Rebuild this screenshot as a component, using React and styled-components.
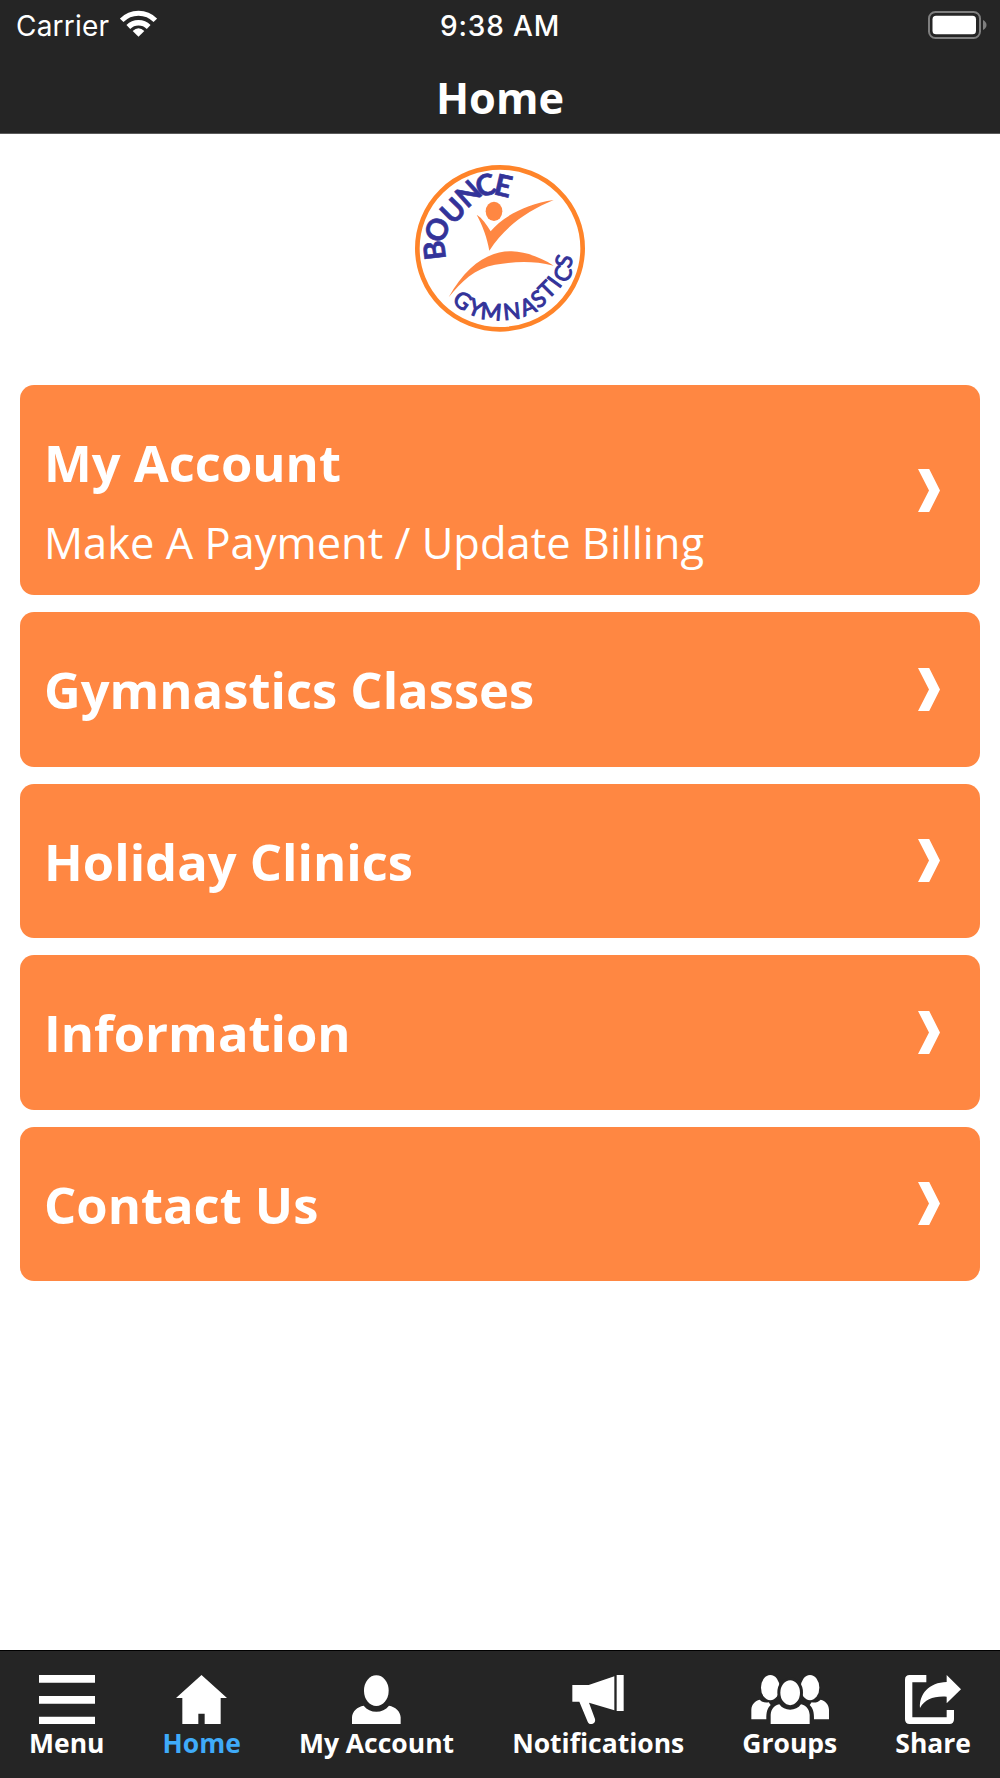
import React from "react";
import styled, { createGlobalStyle } from "styled-components";

const GlobalStyle = createGlobalStyle`
  * { box-sizing: border-box; }
  body { margin: 0; background: #fff; }
`;

const Screen = styled.div`
  width: 1000px;
  height: 1778px;
  display: flex;
  flex-direction: column;
  overflow: hidden;
  background: #fff;
  color: #fff;
  font-family: "Open Sans", "Noto Sans", sans-serif;
`;

const Header = styled.header`
  height: 134px;
  flex: none;
  background: #252525;
  border-bottom: 1px solid #5a5a5a;
`;

const StatusBar = styled.div`
  height: 50px;
  display: grid;
  grid-template-columns: 1fr auto 1fr;
  align-items: center;
  padding: 2px 13px 0 16px;
  font-family: Inter, Roboto, sans-serif;
  font-size: 28px;
  line-height: 34px;
`;

const Carrier = styled.div`
  display: flex;
  align-items: center;
  gap: 11px;
  letter-spacing: 0.2px;

  svg {
    margin-bottom: 6px;
  }
`;

const Clock = styled.div`
  font-weight: 500;
  letter-spacing: 0.85px;
  margin-right: 3px;
`;

const BatterySlot = styled.div`
  display: flex;
  justify-content: flex-end;
  padding-bottom: 3px;
`;

const Title = styled.h1`
  margin: 17px 0 0;
  font-size: 43.3px;
  line-height: 61px;
  font-weight: 700;
  text-align: center;
`;

const Content = styled.main`
  flex: 1;
  display: flex;
  flex-direction: column;
  align-items: stretch;
  padding: 21px 20px 0;
`;

const LogoWrap = styled.div`
  display: flex;
  justify-content: center;
  height: 230px;
`;

const CardList = styled.div`
  display: flex;
  flex-direction: column;
  gap: 17px;
`;

const Card = styled.a`
  display: flex;
  align-items: center;
  justify-content: space-between;
  height: ${(p) => (p.$tall ? "210px" : "154.5px")};
  padding: 0 40px 0 24px;
  border-radius: 14px;
  background: #ff8742;
`;

const CardText = styled.div`
  align-self: flex-start;
  padding-top: 43px;
`;

const CardTitle = styled.h2`
  margin: 0;
  font-size: 50.7px;
  line-height: 70px;
  font-weight: 700;
  white-space: nowrap;
`;

const CardSubtitle = styled.p`
  margin: 15px 0 0;
  font-size: 43.45px;
  line-height: 60px;
  font-weight: 400;
  white-space: nowrap;
`;

const TabBar = styled.nav`
  flex: none;
  height: 128px;
  display: flex;
  justify-content: space-between;
  padding: 24px 29px 0 29px;
  background: #252525;
  border-top: 1px solid #000;
`;

const Tab = styled.a`
  display: flex;
  flex-direction: column;
  align-items: center;
  color: ${(p) => (p.$active ? "#3fabf9" : "#fff")};
`;

const TabIcon = styled.svg`
  height: 49px;
  width: ${(p) => p.$w / 3}px;
  fill: #fff;
`;

const TabLabel = styled.span`
  margin-top: 1px;
  font-size: 26.5px;
  line-height: 36px;
  font-weight: 700;
  white-space: nowrap;
`;

const Wifi = () => (
  <svg width="37" height="28" viewBox="0 0 111 84" fill="none" stroke="#fff">
    <path d="M5 34 A 70 70 0 0 1 106 34" strokeWidth="15" />
    <path d="M25 54 A 43 43 0 0 1 86 54" strokeWidth="16" />
    <path d="M38 66 Q55.500 50 73 66 L55.500 83Z" fill="#fff" stroke="none" />
  </svg>
);

const Battery = () => (
  <svg width="59" height="28" viewBox="0 0 59 28">
    <rect x="1" y="1" width="51" height="26" rx="6.500" fill="none" stroke="#7f7f7f" strokeWidth="2" />
    <rect x="4.500" y="4.700" width="43.500" height="18.600" rx="3.500" fill="#fff" />
    <path d="M55 9 Q58.500 11 58.500 14 T55 19Z" fill="#7f7f7f" />
  </svg>
);

const Chevron = () => (
  <svg width="22" height="43" viewBox="0 0 22 43" fill="#fff">
    <path d="M0 0H11.200L22 21.500L11.200 43H0L11 21.500Z" />
  </svg>
);

const Logo = () => (
  <svg width="190" height="190" viewBox="0 0 570 570">
    <ellipse cx="285" cy="280" rx="248" ry="243" fill="#fff" stroke="#ff8429" strokeWidth="14" />
    <g fill="#ff8742">
      <ellipse cx="267" cy="169" rx="25" ry="29" />
      <path d="M215 179 C232 190 244 207 257 229 C290 187 362 147 446 135 C370 166 300 213 253 287 C247 250 233 212 215 179Z" />
      <path d="M131 427 C185 330 250 288 320 289 C365 291 410 308 446 332 C380 315 318 321 270 329 C210 340 168 380 131 427Z" />
    </g>
    <g fill="#333399" stroke="#333399" fontFamily="Lato, sans-serif">
      <text
        fontSize="88"
        fontWeight="700"
        strokeWidth="2"
        x="123 114 143 186 221 263"
        y="311 268 212 162 128 117"
        rotate="-97 -70 -45 -42 -15 13"
      >
        BOUNCE
      </text>
      <text
        fontSize="68"
        fontWeight="400"
        strokeWidth="3"
        x="139 184 225 297 356 400 429 462 487 496"
        y="442 473 491 496 485 462 435 403 386 342"
        rotate="36 22 5 -6 -22 -36 -45 -54 -67 -76"
      >
        GYMNASTICS
      </text>
    </g>
  </svg>
);

const MenuIcon = () => (
  <TabIcon $w={168} viewBox="0 0 168 147">
    <path d="M0 0H168V23H0ZM0 63H168V86H0ZM0 125H168V147H0Z" />
  </TabIcon>
);

const HomeIcon = () => (
  <TabIcon $w={153} viewBox="0 0 153 147">
    <path d="M76.500 0L153 69H134V147H86V116H67V147H19V69H0Z" />
  </TabIcon>
);

const AccountIcon = () => (
  <TabIcon $w={146} viewBox="0 0 146 147">
    <ellipse cx="73" cy="47" rx="37" ry="46" />
    <path d="M0 147V127C1 109 16 95 35 92C45 104 58 110 73 110S101 104 111 92C130 95 145 109 146 127V147Z" />
  </TabIcon>
);

const MegaphoneIcon = () => (
  <TabIcon $w={156} viewBox="0 0 156 147">
    <path d="M134 0H155V108H134ZM1 30H50L127 4V106L51 83L69 132C71 142 65 147 57 147C52 147 49 144 47 140L22 80H1Z" />
  </TabIcon>
);

const GroupsIcon = () => (
  <TabIcon $w={235} viewBox="0 0 235 147">
    <ellipse cx="58" cy="38" rx="28" ry="38" />
    <ellipse cx="177" cy="38" rx="28" ry="38" />
    <path d="M1 133V104C2 88 12 77 26 74C34 82 43 84 53 82L59 90C49 100 46 109 46 133Z" />
    <path d="M234 133V104C233 88 223 77 209 74C201 82 192 84 182 82L176 90C186 100 189 109 189 133Z" />
    <ellipse cx="117.500" cy="53" rx="34" ry="42" stroke="#252525" strokeWidth="9" />
    <path d="M59 147V119C60 103 70 91 85 88C93 99 104 104 117.500 104S142 99 150 88C165 91 175 103 176 119V147Z" />
  </TabIcon>
);

const ShareIcon = () => (
  <TabIcon $w={168} viewBox="0 0 168 147">
    <path d="M64 0V22H22V127H125V105H147V133Q147 147 133 147H14Q0 147 0 133V14Q0 0 14 0Z" />
    <path d="M125 0L168 43L125 85V65C84 63 61 72 45 99C42 58 72 22 125 21Z" />
  </TabIcon>
);

const cards = [
  { title: "My Account", subtitle: "Make A Payment / Update Billing" },
  { title: "Gymnastics Classes" },
  { title: "Holiday Clinics" },
  { title: "Information" },
  { title: "Contact Us" },
];

const tabs = [
  { label: "Menu", Icon: MenuIcon },
  { label: "Home", Icon: HomeIcon, active: true },
  { label: "My Account", Icon: AccountIcon },
  { label: "Notifications", Icon: MegaphoneIcon },
  { label: "Groups", Icon: GroupsIcon },
  { label: "Share", Icon: ShareIcon },
];

export default function App() {
  return (
    <Screen>
      <GlobalStyle />
      <Header>
        <StatusBar>
          <Carrier>
            Carrier <Wifi />
          </Carrier>
          <Clock>9:38 AM</Clock>
          <BatterySlot>
            <Battery />
          </BatterySlot>
        </StatusBar>
        <Title>Home</Title>
      </Header>
      <Content>
        <LogoWrap>
          <Logo />
        </LogoWrap>
        <CardList>
          {cards.map(({ title, subtitle }) => (
            <Card key={title} $tall={Boolean(subtitle)}>
              <CardText>
                <CardTitle>{title}</CardTitle>
                {subtitle && <CardSubtitle>{subtitle}</CardSubtitle>}
              </CardText>
              <Chevron />
            </Card>
          ))}
        </CardList>
      </Content>
      <TabBar>
        {tabs.map(({ label, Icon, active }) => (
          <Tab key={label} $active={active}>
            <Icon />
            <TabLabel>{label}</TabLabel>
          </Tab>
        ))}
      </TabBar>
    </Screen>
  );
}
